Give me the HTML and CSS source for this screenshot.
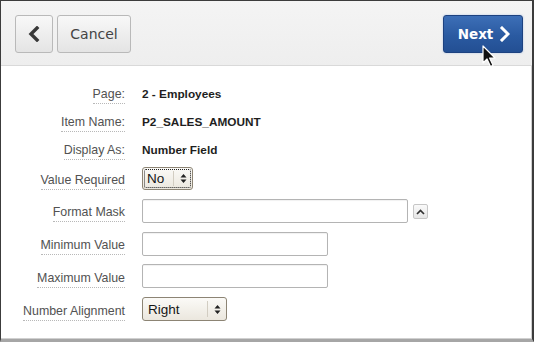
FILE: index.html
```html
<!DOCTYPE html>
<html>
<head>
<meta charset="utf-8">
<link rel="stylesheet" href="styles.css">
</head>
<body>
<div class="frame">
  <div class="header">
    <button class="btn back" aria-label="Back">
      <svg width="14" height="16" viewBox="0 0 14 16"><path d="M10 2 L4 8 L10 14" fill="none" stroke="#383838" stroke-width="3.4" stroke-linecap="square" stroke-linejoin="miter"/></svg>
    </button>
    <button class="btn cancel">Cancel</button>
    <div class="spacer"></div>
    <button class="btn next">Next
      <svg width="11" height="16" viewBox="0 0 11 16"><path d="M3 2 L9 8 L3 14" fill="none" stroke="#fff" stroke-width="3" stroke-linecap="square"/></svg>
    </button>
    <svg class="cursor" width="18" height="24" viewBox="0 0 18 24"><path d="M1 1 L1 18 L5 14 L8.5 21.5 L11 20.3 L7.6 13 L13 13 Z" fill="#111" stroke="#fff" stroke-width="1.2" stroke-linejoin="round"/></svg>
  </div>
  <div class="form">
    <div class="row text">
      <div class="lbl"><span>Page:</span></div>
      <div class="val">2 - Employees</div>
    </div>
    <div class="row text">
      <div class="lbl"><span>Item Name:</span></div>
      <div class="val">P2_SALES_AMOUNT</div>
    </div>
    <div class="row text">
      <div class="lbl"><span>Display As:</span></div>
      <div class="val">Number Field</div>
    </div>
    <div class="row field first">
      <div class="lbl"><span>Value Required</span></div>
      <div class="select focus sel-no">
        <span class="sel-text">No</span>
        <span class="sel-arrows"><svg width="7" height="11" viewBox="0 0 7 11"><path d="M3.5 1 L6.5 4.5 L0.5 4.5 Z M3.5 10 L6.5 6.5 L0.5 6.5 Z" fill="#222"/></svg></span>
      </div>
    </div>
    <div class="row field">
      <div class="lbl"><span>Format Mask</span></div>
      <input class="inp wide" type="text">
      <span class="mini"><svg width="9" height="6" viewBox="0 0 9 6"><path d="M1 5 L4.5 1.5 L8 5" fill="none" stroke="#333" stroke-width="1.7"/></svg></span>
    </div>
    <div class="row field">
      <div class="lbl"><span>Minimum Value</span></div>
      <input class="inp mid" type="text">
    </div>
    <div class="row field">
      <div class="lbl"><span>Maximum Value</span></div>
      <input class="inp mid" type="text">
    </div>
    <div class="row field">
      <div class="lbl"><span>Number Alignment</span></div>
      <div class="select sel-right">
        <span class="sel-text">Right</span>
        <span class="sel-arrows"><svg width="7" height="11" viewBox="0 0 7 11"><path d="M3.5 1 L6.5 4.5 L0.5 4.5 Z M3.5 10 L6.5 6.5 L0.5 6.5 Z" fill="#222"/></svg></span>
      </div>
    </div>
  </div>
</div>
</body>
</html>
```

FILE: styles.css
```css
html, body {
  margin: 0;
  padding: 0;
  background: #fff;
}

.frame {
  width: 534px;
  height: 342px;
  box-sizing: border-box;
  border-left: 1px solid #3c3c3c;
  border-top: 1px solid #3c3c3c;
  border-right: 2px solid #3c3c3c;
  border-bottom: 3px solid #a6a6a6;
  position: relative;
  overflow: hidden;
  background: #fff;
  box-shadow: inset -1px -1px 0 #d0d0d0;
}

.header {
  box-sizing: border-box;
  height: 65px;
  border-bottom: 1px solid #d9d9d9;
  background: linear-gradient(#f4f4f4, #eeeeee);
  display: flex;
  align-items: flex-start;
  padding: 14px 9px 0 14px;
  position: relative;
}

.btn {
  height: 38px;
  box-sizing: border-box;
  border-radius: 3px;
  margin: 0;
  padding: 0;
  display: flex;
  align-items: center;
  justify-content: center;
  font-family: "DejaVu Sans", sans-serif;
}

.back, .cancel {
  border: 1px solid #b9b9b9;
  background: linear-gradient(#f8f8f8, #e4e4e4);
  color: #444;
}

.back {
  width: 38px;
}

.cancel {
  width: 74px;
  margin-left: 4px;
  font-size: 14px;
}

.spacer {
  flex: 1;
}

.next {
  width: 80px;
  border: 1px solid #1d4280;
  background: linear-gradient(#3d6fb7, #2a5aa1 55%, #234f93);
  color: #fff;
  font-weight: bold;
  font-size: 13.5px;
  gap: 6px;
  box-shadow: 0 0 2px rgba(120, 160, 220, 0.6);
  padding-left: 2px;
}

.cursor {
  position: absolute;
  left: 481px;
  top: 44px;
}

.form {
  padding-top: 14px;
  font-family: "Liberation Sans", Arial, sans-serif;
}

.row {
  display: flex;
  align-items: center;
}

.row.text {
  height: 28px;
}

.row.field {
  height: 24px;
  margin-top: 8.75px;
}

.row.field.first {
  margin-top: 2px;
}

.lbl {
  width: 124px;
  flex: none;
  text-align: right;
  font-size: 12.4px;
  color: #525252;
  margin-right: 17px;
}

.row.field .lbl {
  padding-top: 3px;
}

.lbl span {
  border-bottom: 1px dotted #b8b8b8;
  padding-bottom: 2px;
}

.val {
  font-size: 11.8px;
  font-weight: bold;
  color: #1e1e1e;
}

.inp {
  height: 24px;
  box-sizing: border-box;
  border: 1px solid #b4b4b4;
  border-radius: 2px;
  margin: 0;
  padding: 0 4px;
  background: #fff;
  box-shadow: inset 0 1px 1px rgba(0, 0, 0, 0.06);
  font-family: "Liberation Sans", Arial, sans-serif;
}

.inp.wide {
  width: 266px;
}

.inp.mid {
  width: 186px;
}

.mini {
  width: 15px;
  height: 15px;
  box-sizing: border-box;
  border: 1px solid #c6c6c6;
  border-radius: 2px;
  background: linear-gradient(#fafafa, #e6e6e6);
  margin-left: 5px;
  margin-top: 2px;
  display: flex;
  align-items: center;
  justify-content: center;
}

.select {
  height: 23px;
  box-sizing: border-box;
  border: 1px solid #8c8474;
  border-radius: 3px;
  background: linear-gradient(#fbfaf7, #ebe7de);
  display: flex;
  align-items: center;
  position: relative;
  font-family: "Liberation Sans", Arial, sans-serif;
  font-size: 13.5px;
  color: #151515;
}

.sel-no {
  width: 51px;
}

.sel-right {
  width: 85px;
  height: 24px;
}

.sel-text {
  flex: 1;
  padding-left: 4px;
}

.sel-right .sel-text {
  padding-left: 5px;
}

.sel-arrows {
  width: 18px;
  align-self: stretch;
  display: flex;
  align-items: center;
  justify-content: center;
  border-left: 1px solid #d2cdc2;
  margin: 3px 0;
}

.focus::after {
  content: "";
  position: absolute;
  left: 1px;
  top: 1px;
  right: 1px;
  bottom: 1px;
  border: 1px dotted #222;
  border-radius: 2px;
}
```
